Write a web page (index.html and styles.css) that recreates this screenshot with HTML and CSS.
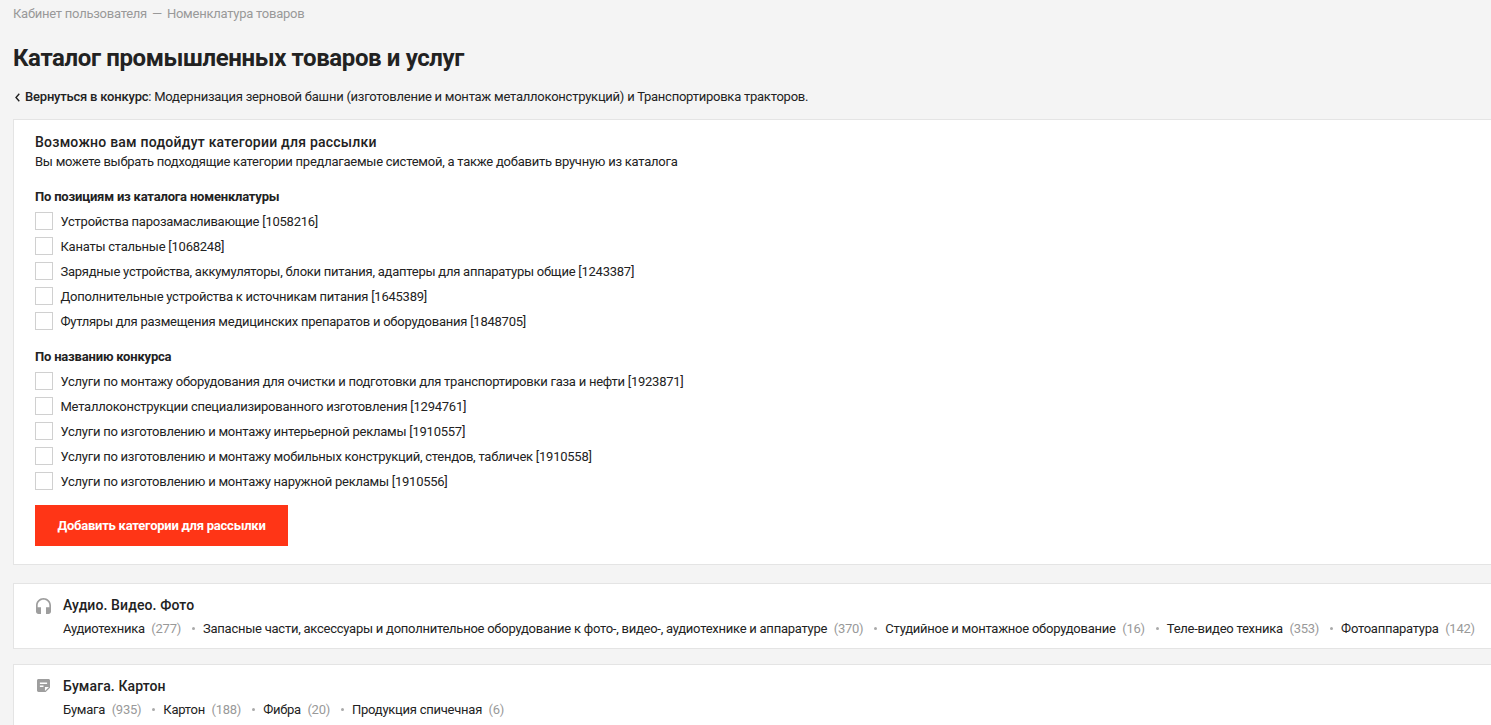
FILE: index.html
```html
<!DOCTYPE html>
<html lang="ru">
<head>
<meta charset="utf-8">
<title>Каталог промышленных товаров и услуг</title>
<link rel="stylesheet" href="styles.css">
</head>
<body>
<div class="page">
  <nav class="crumbs"><span>Кабинет пользователя</span><span class="crumb-sep">—</span><span>Номенклатура товаров</span></nav>
  <h1 class="title">Каталог промышленных товаров и услуг</h1>
  <p class="back">
    <svg class="back-icon" width="5" height="9" viewBox="0 0 5 9"><path d="M4.300 .7 1 4.500l3.300 3.800" fill="none" stroke="#222" stroke-width="1.400"/></svg>
    <span><b class="medium">Вернуться в конкурс</b>: Модернизация зерновой башни (изготовление и монтаж металлоконструкций) и Транспортировка тракторов.</span>
  </p>

  <section class="card suggest">
    <h2 class="suggest-title">Возможно вам подойдут категории для рассылки</h2>
    <p class="suggest-sub">Вы можете выбрать подходящие категории предлагаемые системой, а также добавить вручную из каталога</p>

    <h3 class="group-title">По позициям из каталога номенклатуры</h3>
    <ul class="checks">
      <li class="check"><span class="box"></span>Устройства парозамасливающие [1058216]</li>
      <li class="check"><span class="box"></span>Канаты стальные [1068248]</li>
      <li class="check"><span class="box"></span>Зарядные устройства, аккумуляторы, блоки питания, адаптеры для аппаратуры общие [1243387]</li>
      <li class="check"><span class="box"></span>Дополнительные устройства к источникам питания [1645389]</li>
      <li class="check"><span class="box"></span>Футляры для размещения медицинских препаратов и оборудования [1848705]</li>
    </ul>

    <h3 class="group-title second">По названию конкурса</h3>
    <ul class="checks">
      <li class="check"><span class="box"></span>Услуги по монтажу оборудования для очистки и подготовки для транспортировки газа и нефти [1923871]</li>
      <li class="check"><span class="box"></span>Металлоконструкции специализированного изготовления [1294761]</li>
      <li class="check"><span class="box"></span>Услуги по изготовлению и монтажу интерьерной рекламы [1910557]</li>
      <li class="check"><span class="box"></span>Услуги по изготовлению и монтажу мобильных конструкций, стендов, табличек [1910558]</li>
      <li class="check"><span class="box"></span>Услуги по изготовлению и монтажу наружной рекламы [1910556]</li>
    </ul>

    <button class="add-btn" type="button">Добавить категории для рассылки</button>
  </section>

  <section class="card cat first-cat">
    <span class="cat-icon"><svg width="15" height="16" viewBox="3 1 18 19"><path fill="#9e9e9e" d="M12 1c-4.970 0-9 4.030-9 9v7c0 1.660 1.340 3 3 3h3v-8H5v-2c0-3.870 3.130-7 7-7s7 3.130 7 7v2h-4v8h3c1.660 0 3-1.340 3-3v-7c0-4.970-4.030-9-9-9z"/></svg></span>
    <div class="cat-body">
      <h2 class="cat-title">Аудио. Видео. Фото</h2>
      <div class="cat-items">
        <span class="item">Аудиотехника<i class="count">(277)</i></span>
        <span class="item">Запасные части, аксессуары и дополнительное оборудование к фото-, видео-, аудиотехнике и аппаратуре<i class="count">(370)</i></span>
        <span class="item">Студийное и монтажное оборудование<i class="count">(16)</i></span>
        <span class="item">Теле-видео техника<i class="count">(353)</i></span>
        <span class="item">Фотоаппаратура<i class="count">(142)</i></span>
      </div>
    </div>
  </section>

  <section class="card cat">
    <span class="cat-icon"><svg width="13" height="13" viewBox="3 3 18 18"><path fill="#9e9e9e" d="M19 3H4.990C3.890 3 3 3.900 3 5l.010 14c0 1.100.890 2 1.990 2h10l6-6V5c0-1.100-.900-2-2-2zM7 8h10v2H7V8zm5 6H7v-2h5v2zm2 5.500V14h5.500L14 19.500z"/></svg></span>
    <div class="cat-body">
      <h2 class="cat-title">Бумага. Картон</h2>
      <div class="cat-items">
        <span class="item">Бумага<i class="count">(935)</i></span>
        <span class="item">Картон<i class="count">(188)</i></span>
        <span class="item">Фибра<i class="count">(20)</i></span>
        <span class="item">Продукция спичечная<i class="count">(6)</i></span>
      </div>
    </div>
  </section>
</div>
</body>
</html>
```

FILE: styles.css
```css
html, body {
  margin: 0;
  height: 725px;
  overflow: hidden;
  background: #f4f4f4;
}
body {
  font-family: Roboto, "Liberation Sans", sans-serif;
  font-size: 13px;
  letter-spacing: -0.245px;
  color: #222;
}
.page {
  width: 1520px;
  padding-left: 13px;
}
.crumbs {
  display: flex;
  gap: 5px;
  height: 28px;
  line-height: 28px;
  color: #999;
}
.title {
  margin: 14px 0 0;
  font-size: 24px;
  line-height: 32px;
  font-weight: 700;
  letter-spacing: -0.385px;
  color: #222;
}
.back {
  display: flex;
  align-items: center;
  gap: 5px;
  margin: 13px 0 0;
  line-height: 20px;
  padding-left: 2px;
  letter-spacing: -0.24px;
}
.medium {
  font-weight: 500;
  letter-spacing: -0.2px;
}
.card {
  background: #fff;
  border: 1px solid #e4e4e4;
  box-sizing: border-box;
}
.suggest {
  margin-top: 12px;
  height: 446px;
  padding: 13px 21px 0;
}
.suggest-title {
  margin: 0;
  font-size: 14px;
  line-height: 18px;
  font-weight: 500;
  letter-spacing: 0.23px;
}
.suggest-sub {
  margin: 1px 0 0;
  line-height: 20px;
}
.group-title {
  margin: 15px 0 0;
  font-size: 13px;
  line-height: 20px;
  font-weight: 700;
  letter-spacing: -0.19px;
}
.group-title.second { margin-top: 13px; }
.checks {
  list-style: none;
  margin: 2px 0 0;
  padding: 0;
}
.check {
  display: flex;
  align-items: center;
  gap: 7.500px;
  height: 25px;
}
.box {
  align-self: flex-start;
  margin-top: 3px;
  width: 18px;
  height: 18px;
  box-sizing: border-box;
  background: #fff;
  border: 1px solid #d0d0d0;
}
.add-btn {
  display: block;
  margin-top: 11px;
  width: 253px;
  height: 41px;
  border: 0;
  padding: 0;
  background: #ff3516;
  color: #fff;
  font-family: inherit;
  font-size: 13px;
  font-weight: 700;
  letter-spacing: -0.23px;
}
.cat {
  display: flex;
  margin-top: 15px;
  padding: 11px 21px 0;
  gap: 11px;
  height: 66px;
}
.first-cat { margin-top: 18px; }
.cat-icon {
  flex: none;
  display: flex;
  justify-content: center;
  align-items: flex-start;
  width: 17px;
  margin-top: 3px;
  height: 18px;
}
.cat-items {
  display: flex;
  margin-top: 4px;
  line-height: 20px;
  white-space: nowrap;
}
.cat-title {
  margin: 0;
  font-size: 14px;
  line-height: 20px;
  font-weight: 500;
  letter-spacing: 0.11px;
}
.item + .item::before {
  content: "";
  display: inline-block;
  width: 3px;
  height: 3px;
  border-radius: 50%;
  background: #aaa;
  margin: 0 8px 2px 11px;
  vertical-align: middle;
}
.count {
  font-style: normal;
  color: #999;
  margin-left: 6.500px;
}
```
